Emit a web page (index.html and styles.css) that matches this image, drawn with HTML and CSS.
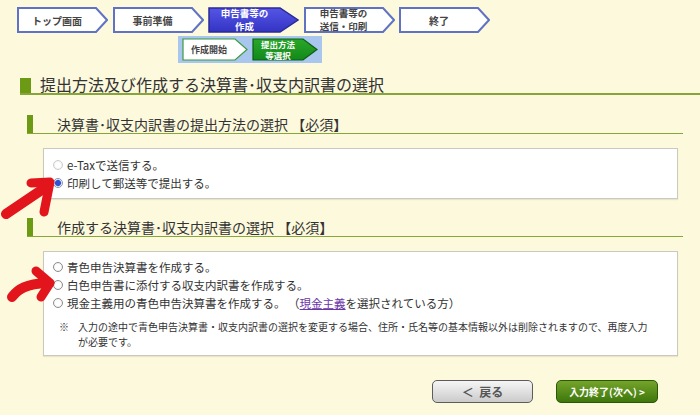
FILE: index.html
```html
<!DOCTYPE html>
<html lang="ja">
<head>
    <meta charset="UTF-8">
    <title>決算書・収支内訳書の選択</title>
    <link rel="stylesheet" href="styles.css">
</head>
<body>
<div class="page">
    <!-- progress steps -->
    <div class="steps">
        <div class="step">
            <svg width="91" height="26"><polygon points="1,1 79,1 90,13 79,25 1,25" class="shape-white"/></svg>
            <span>トップ画面</span>
        </div>
        <div class="step">
            <svg width="91" height="26"><polygon points="1,1 79,1 90,13 79,25 1,25" class="shape-white"/></svg>
            <span>事前準備</span>
        </div>
        <div class="step step-active">
            <svg width="91" height="26">
                <defs>
                    <linearGradient id="blueFill" x1="0" y1="0" x2="0" y2="1">
                        <stop offset="0" stop-color="#5656e6"/>
                        <stop offset="1" stop-color="#3434c4"/>
                    </linearGradient>
                </defs>
                <polygon points="1,1 72,1 90,13 72,25 1,25" fill="url(#blueFill)" stroke="#2a2a98" stroke-width="1.5"/>
            </svg>
            <span class="two-line">申告書等の<br>作成</span>
        </div>
        <div class="step">
            <svg width="91" height="26"><polygon points="1,1 79,1 90,13 79,25 1,25" class="shape-white"/></svg>
            <span class="two-line">申告書等の<br>送信・印刷</span>
        </div>
        <div class="step">
            <svg width="91" height="26"><polygon points="1,1 79,1 90,13 79,25 1,25" class="shape-white"/></svg>
            <span>終了</span>
        </div>
    </div>

    <div class="substeps">
        <div class="step step-small">
            <svg width="66" height="23"><polygon points="1,1 53,1 65,11.5 53,22 1,22" class="shape-sub"/></svg>
            <span>作成開始</span>
        </div>
        <div class="step step-small step-green">
            <svg width="66" height="23">
                <defs>
                    <linearGradient id="greenFill" x1="0" y1="0" x2="0" y2="1">
                        <stop offset="0" stop-color="#2aa82a"/>
                        <stop offset="1" stop-color="#12881a"/>
                    </linearGradient>
                </defs>
                <polygon points="1,1 51,1 65,11.5 51,22 1,22" fill="url(#greenFill)" stroke="#0c5e12" stroke-width="1.2"/>
            </svg>
            <span class="two-line-small">提出方法<br>等選択</span>
        </div>
    </div>

    <h2 class="section-title">提出方法及び作成する決算書･収支内訳書の選択</h2>

    <h3 class="sub-title">決算書･収支内訳書の提出方法の選択 【必須】</h3>
    <div class="choice-box">
        <label class="option"><span class="radio radio-off"></span>e-Taxで送信する。</label>
        <label class="option"><span class="radio radio-on"></span>印刷して郵送等で提出する。</label>
    </div>

    <h3 class="sub-title sub-title-second">作成する決算書･収支内訳書の選択 【必須】</h3>
    <div class="choice-box choice-box-second">
        <label class="option"><span class="radio"></span>青色申告決算書を作成する。</label>
        <label class="option"><span class="radio"></span>白色申告書に添付する収支内訳書を作成する。</label>
        <label class="option"><span class="radio"></span>現金主義用の青色申告決算書を作成する。&nbsp;（<a href="#" class="link">現金主義</a>を選択されている方）</label>
        <div class="note">
            <span class="note-mark">※</span>
            <span>入力の途中で青色申告決算書・収支内訳書の選択を変更する場合、住所・氏名等の基本情報以外は削除されますので、再度入力<br>が必要です。</span>
        </div>
    </div>

    <div class="actions">
        <button class="btn btn-back">＜&nbsp;&nbsp;戻る</button>
        <button class="btn btn-next">入力終了(次へ) &gt;</button>
    </div>

    <!-- hand-drawn red pointers -->
    <svg class="pointers" width="700" height="415">
        <g fill="none" stroke="#e2141c" stroke-linecap="round" stroke-linejoin="round">
            <path d="M6 214 L46 187" stroke-width="10"/>
            <path d="M31 183 L50 182 L44 212" stroke-width="9"/>
            <path d="M12 297 C18 289 26 284 47 283" stroke-width="10"/>
            <path d="M36 271 L50 283 L41 297" stroke-width="9"/>
        </g>
    </svg>
</div>
</body>
</html>
```

FILE: styles.css
```css
:root {
    --bg: #fdf9dc;
    --green: #6c9a14;
    --line: #86a63a;
    --text: #333;
}

body {
    margin: 0;
    background: var(--bg);
    font-family: "Noto Sans CJK JP", sans-serif;
    color: var(--text);
}

.page {
    position: relative;
    width: 700px;
    height: 415px;
    overflow: hidden;
}

/* steps */
.steps {
    display: flex;
    gap: 4.5px;
    padding: 7px 0 0 17px;
}

.step {
    position: relative;
    width: 91px;
    height: 26px;
    box-sizing: border-box;
    padding-right: 11px;
    display: flex;
    align-items: center;
    justify-content: center;
    font-size: 10px;
    font-weight: bold;
    line-height: 11px;
    text-align: center;
    color: #444;
}

.step svg {
    position: absolute;
    left: 0;
    top: 0;
}

.step span {
    position: relative;
}

.step .two-line {
    font-size: 9.5px;
    line-height: 13px;
}

.shape-white {
    fill: #fff;
    stroke: #5f72c4;
    stroke-width: 2;
}

.step-active {
    padding-right: 18px;
    color: #fff;
}

.substeps {
    display: flex;
    gap: 4px;
    width: 144px;
    height: 27px;
    box-sizing: border-box;
    margin: 3px 0 0 178px;
    padding: 2px 4px;
    background: #a9c6ee;
}

.step-small {
    width: 66px;
    height: 23px;
    padding-right: 12px;
    font-size: 9px;
    line-height: 10px;
}

.step .two-line-small {
    font-size: 8.5px;
    line-height: 10.5px;
}

.shape-sub {
    fill: #fff;
    stroke: #3b9a3e;
    stroke-width: 1.2;
}

.step-green {
    padding-right: 14px;
    color: #fff;
}

/* headings */
.section-title {
    display: flex;
    align-items: flex-end;
    gap: 9px;
    height: 17px;
    margin: 13px 0 0 20px;
    font-size: 16px;
    font-weight: normal;
    line-height: 17px;
    border-bottom: 2px solid var(--line);
}

.section-title::before {
    content: "";
    width: 11px;
    height: 15px;
    background: var(--green);
}

.sub-title {
    display: flex;
    align-items: flex-end;
    gap: 24px;
    height: 18px;
    margin: 20px 17px 0 27px;
    font-size: 14px;
    font-weight: normal;
    line-height: 18px;
    border-bottom: 1.5px solid var(--line);
}

.sub-title::before {
    content: "";
    width: 6px;
    height: 18px;
    background: var(--green);
}

.sub-title-second {
    margin-top: 19px;
}

/* option boxes */
.choice-box {
    margin: 14px 22px 0 43px;
    padding: 7px 0 6px 9px;
    background: #fff;
    border: 1px solid #c9c9c0;
    box-shadow: 0 1px 1px rgba(0,0,0,0.08);
}

.choice-box-second {
    margin-top: 14px;
    padding-top: 6px;
}

.option {
    display: flex;
    align-items: center;
    height: 18px;
    font-size: 11.5px;
    line-height: 18px;
}

.radio {
    width: 10px;
    height: 10px;
    margin-right: 4px;
    box-sizing: border-box;
    border: 1px solid #8c8c8c;
    border-radius: 50%;
    background: radial-gradient(circle, #fff 40%, #e6e6e6);
}

.radio-off {
    border-color: #cdcdcd;
}

.radio-on {
    border-color: #8894b0;
    background: radial-gradient(circle, #2f52d4 0 2.6px, #9fb0ea 3.2px, #fff 3.8px);
}

.link {
    color: #6a36a8;
}

.note {
    display: flex;
    gap: 9px;
    margin: 7px 0 0 6px;
    font-size: 10px;
    line-height: 15px;
    white-space: nowrap;
}

/* buttons */
.actions {
    display: flex;
    justify-content: flex-end;
    gap: 23px;
    margin-top: 24px;
    padding-right: 42px;
}

.btn {
    width: 101px;
    height: 23px;
    box-sizing: border-box;
    border-radius: 5px;
    font-family: "Noto Sans CJK JP", sans-serif;
    font-weight: bold;
    line-height: 19px;
    padding: 0;
    cursor: pointer;
}

.btn-back {
    border: 1.5px solid #5c5c5c;
    background: linear-gradient(#f6f6f6, #cbcbcb);
    color: #555;
    font-size: 12px;
}

.btn-next {
    width: 102px;
    border: 1.5px solid #2c5708;
    background: linear-gradient(#74a42a, #3e770c);
    color: #fff;
    font-size: 10px;
}

.pointers {
    position: absolute;
    left: 0;
    top: 0;
    pointer-events: none;
}
```
